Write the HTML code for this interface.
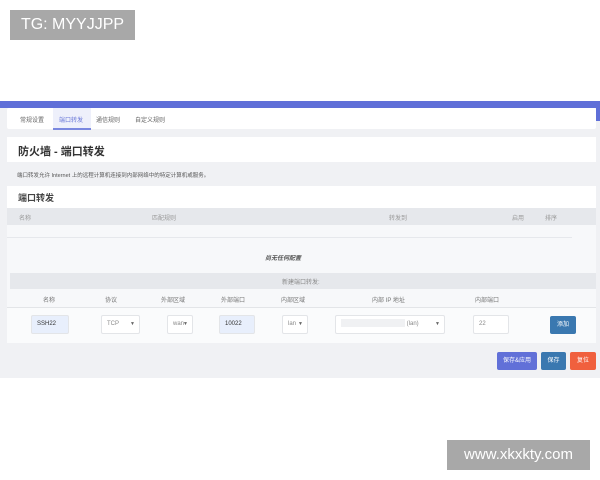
<!DOCTYPE html>
<html><head><meta charset="utf-8"><style>
*{margin:0;padding:0;box-sizing:border-box}
body{width:600px;height:480px;background:#fff;position:relative;overflow:hidden;font-family:"Liberation Sans","Noto Sans CJK SC",sans-serif;color:#555}
.a{position:absolute}
.t{font-size:6px;color:#777;white-space:nowrap}
.inp{position:absolute;height:19px;background:#fff;border:1px solid #e3e5e8;border-radius:2px;font-size:6px;color:#888;line-height:17px;padding-left:5px}
.btn{position:absolute;height:18px;border-radius:2px;color:#fff;font-size:6px;line-height:18px;text-align:center}
.arr{position:absolute;right:4px;font-size:5px;color:#666}
</style></head><body>
<div class="a" style="left:10px;top:10px;width:125px;height:30px;background:#a8a8a8;color:#fff;font-size:16px;line-height:30px;text-align:center">TG: MYYJJPP</div>
<div class="a" style="left:0;top:101px;width:600px;height:277px;background:#f0f1f4"></div>
<div class="a" style="left:0;top:101px;width:600px;height:7px;background:#5f6fd8"></div>
<div class="a" style="left:596px;top:101px;width:4px;height:20px;background:#5f6fd8"></div>
<div class="a" style="left:7px;top:108px;width:589px;height:21px;background:#fff;border-radius:2px"></div>
<div class="a" style="left:53px;top:108px;width:38px;height:22px;background:#eef0fb;border-bottom:2px solid #7a88e0"></div>
<div class="a t" style="left:20px;top:115px;color:#666">常规设置</div>
<div class="a t" style="left:59px;top:115px;color:#6a78d8">端口转发</div>
<div class="a t" style="left:96px;top:115px;color:#666">通信规则</div>
<div class="a t" style="left:135px;top:115px;color:#666">自定义规则</div>
<div class="a" style="left:7px;top:137px;width:589px;height:25px;background:#fff"></div>
<div class="a" style="left:18px;top:143px;font-size:11px;font-weight:bold;color:#333">防火墙 - 端口转发</div>
<div class="a t" style="left:17px;top:171px;font-size:5.5px;color:#555">端口转发允许 Internet 上的远程计算机连接到内部网络中的特定计算机或服务。</div>
<div class="a" style="left:7px;top:186px;width:589px;height:22px;background:#fff"></div>
<div class="a" style="left:18px;top:191px;font-size:9px;font-weight:bold;color:#444">端口转发</div>
<div class="a" style="left:7px;top:208px;width:589px;height:17px;background:#e6e8ec"></div>
<div class="a t" style="left:19px;top:213px;color:#999">名称</div>
<div class="a t" style="left:152px;top:213px;color:#999">匹配规则</div>
<div class="a t" style="left:389px;top:213px;color:#999">转发到</div>
<div class="a t" style="left:512px;top:213px;color:#999">启用</div>
<div class="a t" style="left:545px;top:213px;color:#999">排序</div>
<div class="a" style="left:7px;top:225px;width:589px;height:118px;background:#f7f8fa"></div>
<div class="a" style="left:7px;top:237px;width:565px;height:1px;background:#e6e8ec"></div>
<div class="a t" style="left:265px;top:253px;color:#555;font-style:italic;font-weight:bold">尚无任何配置</div>
<div class="a" style="left:10px;top:273px;width:586px;height:16px;background:#e6e8ec"></div>
<div class="a t" style="left:282px;top:277px;color:#888">新建端口转发:</div>
<div class="a t" style="left:43px;top:295px">名称</div>
<div class="a t" style="left:105px;top:295px">协议</div>
<div class="a t" style="left:161px;top:295px">外部区域</div>
<div class="a t" style="left:221px;top:295px">外部端口</div>
<div class="a t" style="left:281px;top:295px">内部区域</div>
<div class="a t" style="left:372px;top:295px">内部 IP 地址</div>
<div class="a t" style="left:475px;top:295px">内部端口</div>
<div class="a" style="left:7px;top:307px;width:589px;height:1px;background:#e3e5e8"></div>
<div class="a" style="left:7px;top:308px;width:589px;height:35px;background:#fafbfc"></div>
<div class="inp" style="left:31px;top:315px;width:38px;background:#e8effc;color:#333">SSH22</div>
<div class="inp" style="left:101px;top:315px;width:39px">TCP<span class="arr">▼</span></div>
<div class="inp" style="left:167px;top:315px;width:26px">wan<span class="arr">▼</span></div>
<div class="inp" style="left:219px;top:315px;width:36px;background:#e8effc;color:#333">10022</div>
<div class="inp" style="left:282px;top:315px;width:26px">lan<span class="arr">▼</span></div>
<div class="inp" style="left:335px;top:315px;width:110px"><span style="display:inline-block;width:64px;height:8px;background:#f0f1f3;vertical-align:middle"></span> (lan)<span class="arr">▼</span></div>
<div class="inp" style="left:473px;top:315px;width:36px">22</div>
<div class="btn" style="left:550px;top:316px;width:26px;height:18px;background:#3a78b0">添加</div>
<div class="btn" style="left:497px;top:352px;width:40px;background:#6170d8">保存&amp;应用</div>
<div class="btn" style="left:541px;top:352px;width:25px;background:#3a78b0">保存</div>
<div class="btn" style="left:570px;top:352px;width:26px;background:#f0603e">复位</div>
<div class="a" style="left:447px;top:440px;width:143px;height:30px;background:#a8a8a8;color:#fff;font-size:15px;line-height:30px;text-align:center">www.xkxkty.com</div>
</body></html>
